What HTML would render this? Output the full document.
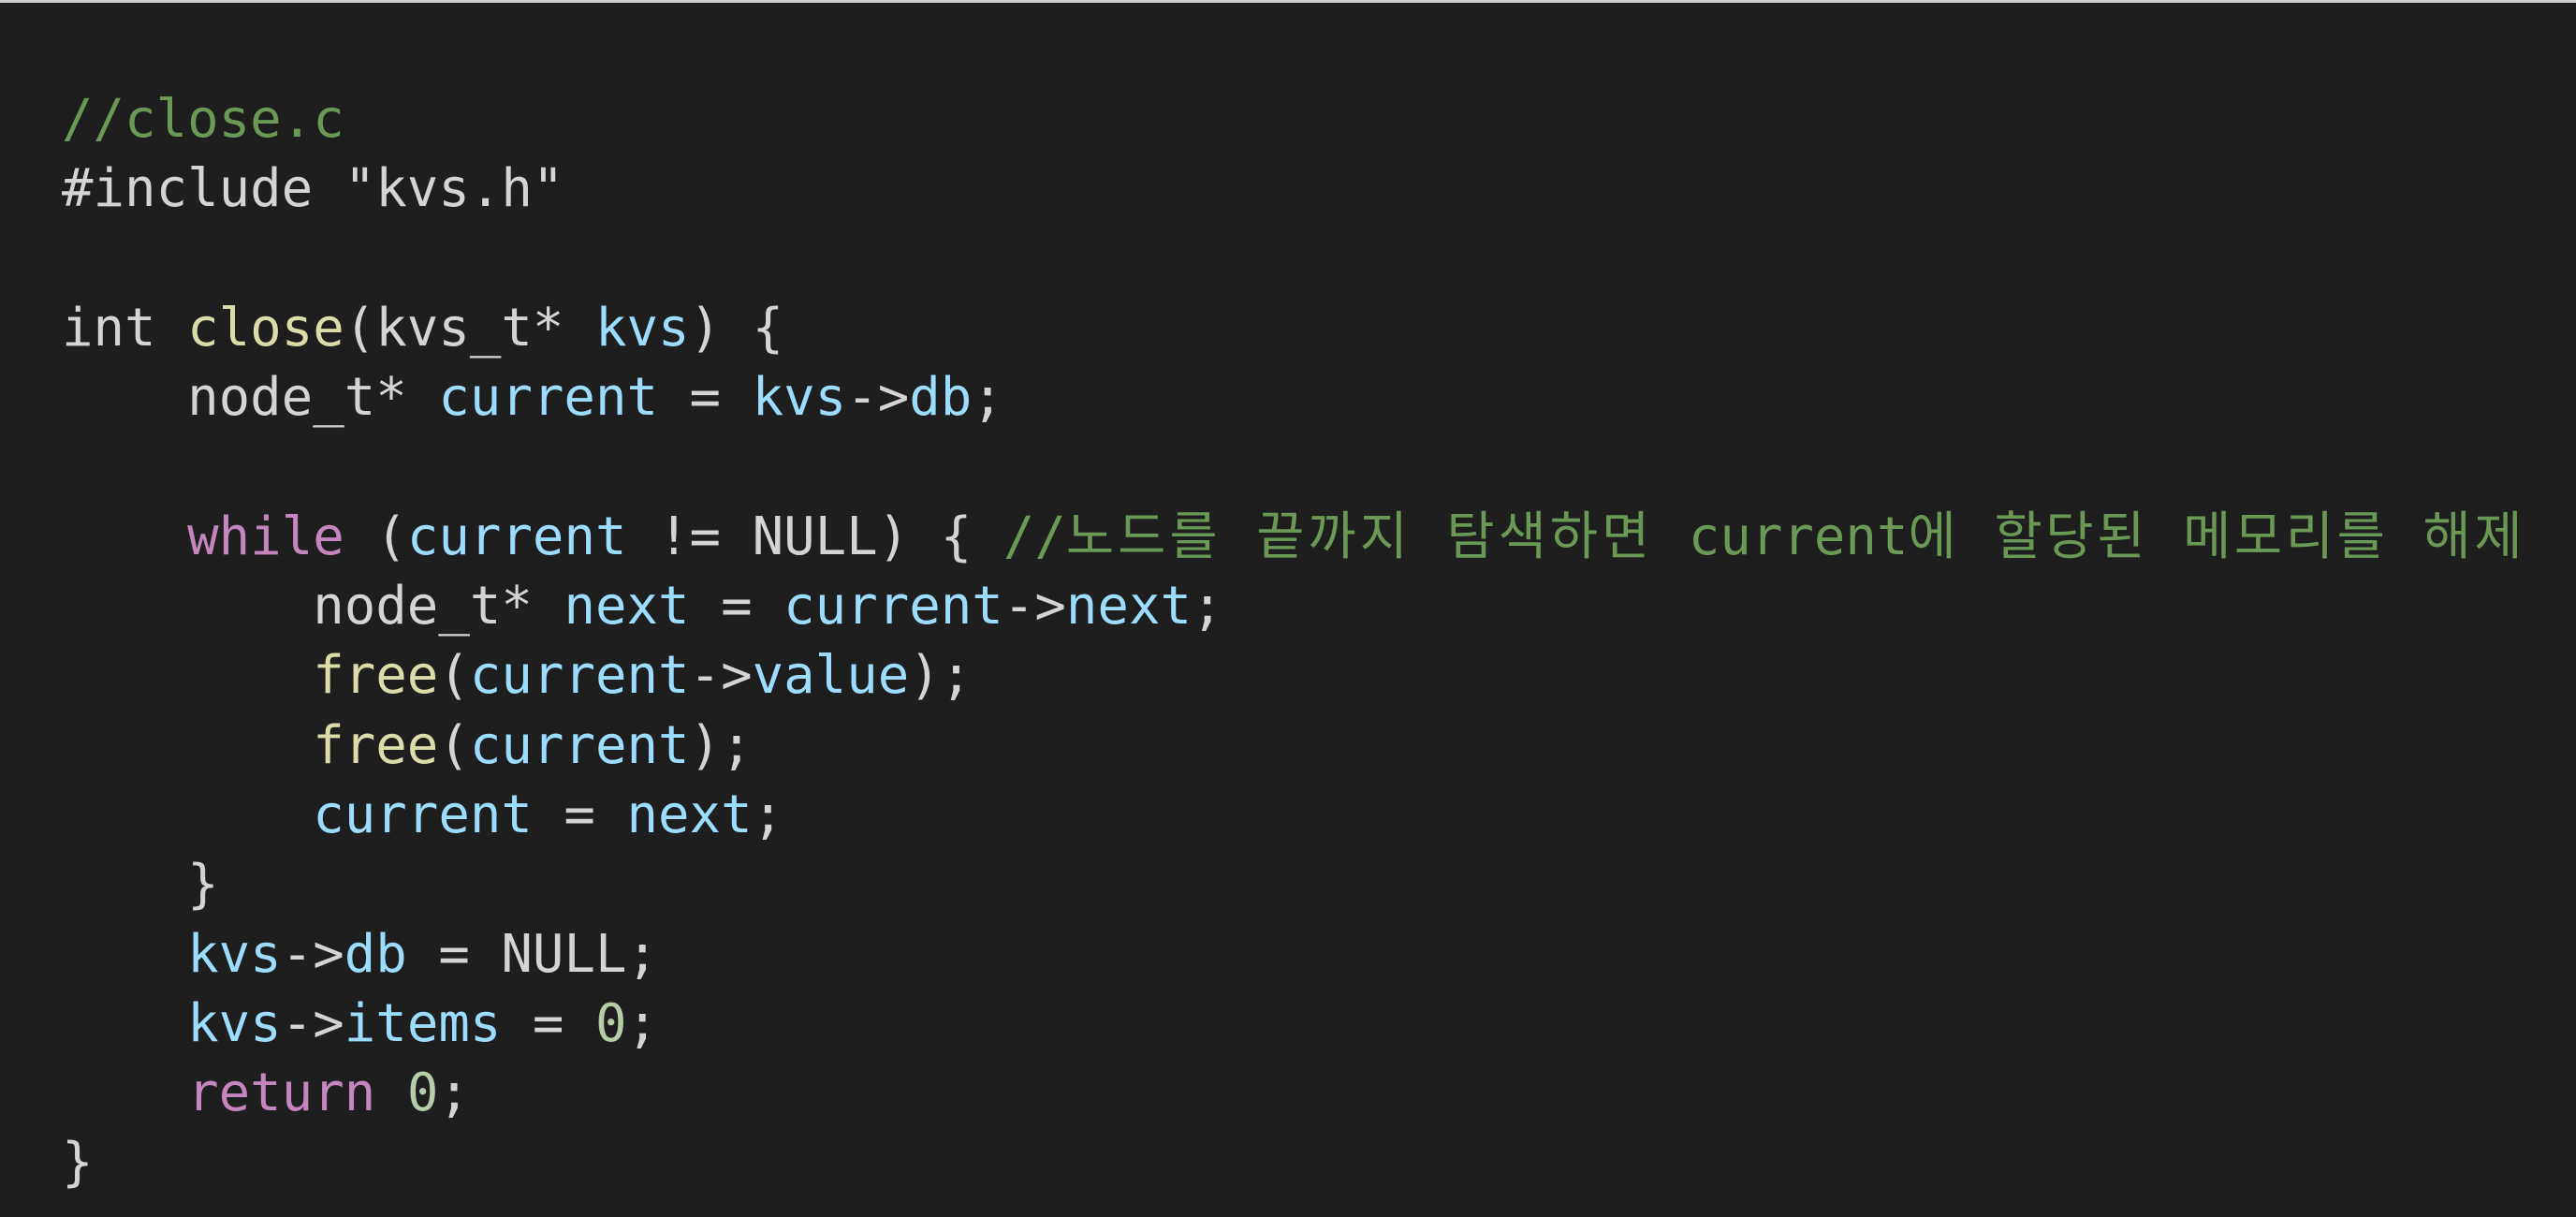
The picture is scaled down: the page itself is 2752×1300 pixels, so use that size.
<!DOCTYPE html>
<html><head><meta charset="utf-8"><style>
html,body{margin:0;padding:0;background:#1e1e1e;width:2752px;height:1300px;overflow:hidden}
.top{position:absolute;left:0;top:0;width:2752px;height:3px;background:#cfcfcf}
pre{position:absolute;left:66px;top:91px;margin:0;font-family:"DejaVu Sans Mono","Liberation Mono","Noto Sans CJK KR",monospace;font-size:55.7px;line-height:74.3px;color:#d4d4d4}
.c{color:#6a9955}.v{color:#9cdcfe}.f{color:#dcdcaa}.k{color:#c586c0}.n{color:#b5cea8}
.h{letter-spacing:4px}.h2{letter-spacing:3.6px}
</style></head><body><div class="top"></div>
<pre><span class="c">//close.c</span>
#include "kvs.h"

int <span class="f">close</span>(kvs_t* <span class="v">kvs</span>) {
    node_t* <span class="v">current</span> = <span class="v">kvs</span>-&gt;<span class="v">db</span>;

    <span class="k">while</span> (<span class="v">current</span> != NULL) { <span class="c">//<span class="h">노드를 끝까지 탐색하면 </span>current<span class="h2">에 할당된 메모리를 해제</span></span>
        node_t* <span class="v">next</span> = <span class="v">current</span>-&gt;<span class="v">next</span>;
        <span class="f">free</span>(<span class="v">current</span>-&gt;<span class="v">value</span>);
        <span class="f">free</span>(<span class="v">current</span>);
        <span class="v">current</span> = <span class="v">next</span>;
    }
    <span class="v">kvs</span>-&gt;<span class="v">db</span> = NULL;
    <span class="v">kvs</span>-&gt;<span class="v">items</span> = <span class="n">0</span>;
    <span class="k">return</span> <span class="n">0</span>;
}</pre>
</body></html>
